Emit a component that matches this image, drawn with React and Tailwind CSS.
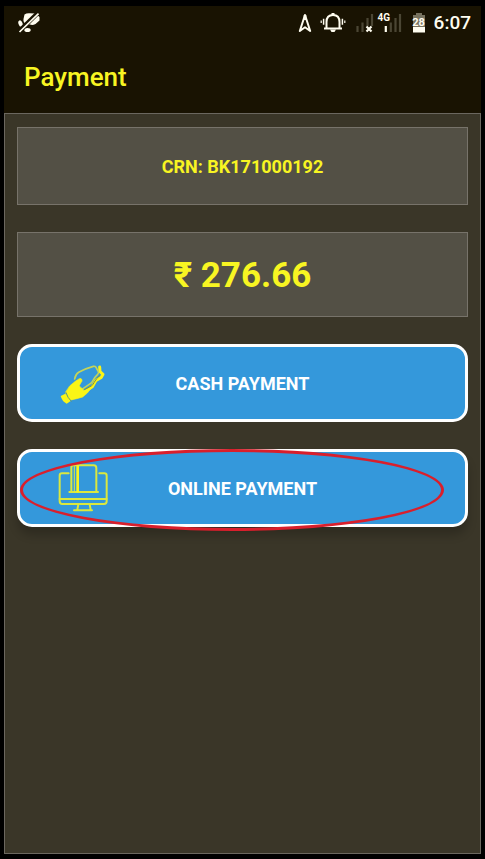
import React from "react";

function MutedBirdIcon() {
  return (
    <svg className="h-5 w-[22px]" viewBox="0 0 22 20" fill="#fffdf0" aria-hidden="true">
      <path d="M6.500 1.500q2-1.500 5-1.300l6 .2 4 3.600v3.500l-4 3.500q-3 1.500-5.500.5l-4-.5q-3-1.500-2.500-5z" />
      <ellipse cx="2.500" cy="10.500" rx="2" ry="3.300" transform="rotate(-20 2.500 10.500)" />
      <ellipse cx="9.500" cy="17" rx="3.200" ry="2" />
      <path d="M1 18.300L19.500 .3" stroke="#191302" strokeWidth="4.500" />
      <path d="M1.500 19L20.500 .7" stroke="#fffdf0" strokeWidth="1.700" />
    </svg>
  );
}

function NavigationIcon() {
  return (
    <svg className="h-5 w-[14px]" viewBox="0 0 14 20" fill="none" stroke="#fffdf0" strokeWidth="2" aria-hidden="true">
      <path d="M7 2L1.800 18 7 14.200 12.200 18z" strokeLinejoin="round" />
      <path d="M7 2v5" strokeWidth="2.600" />
    </svg>
  );
}

function BellIcon() {
  return (
    <svg className="h-5 w-[26px]" viewBox="0 0 26 20" fill="none" stroke="#fffdf0" aria-hidden="true">
      <path d="M4 15.500h18M6.500 15V9Q6.500 2 13 2T19.500 9V15" strokeWidth="2" />
      <path d="M13 0v2" strokeWidth="3" />
      <path d="M10 16.500h6l-1.500 2.500h-3z" fill="#fffdf0" stroke="none" />
      <path d="M3.600 5.800v6M22.400 5.800v6" strokeWidth="1.500" />
      <path d="M1.200 7.500v2.500M24.800 7.500v2.500" strokeWidth="1.200" />
    </svg>
  );
}

function NoSignalIcon() {
  return (
    <svg className="h-5 w-[18px]" viewBox="0 0 18 20" fill="none" aria-hidden="true">
      <path d="M1.500 13v6M6.500 9.500V19M11.500 5v8M16 1v12" stroke="#4b4634" strokeWidth="2.200" />
      <path d="M10.500 13.500l5 5M15.500 13.500l-5 5" stroke="#fffdf0" strokeWidth="2.200" />
    </svg>
  );
}

function MobileSignal() {
  return (
    <span className="relative h-5 w-6">
      <svg className="h-5 w-6" viewBox="0 0 24 20" fill="none" strokeWidth="2.200" aria-hidden="true">
        <path d="M7.800 13v6" stroke="#fffdf0" />
        <path d="M12.800 9.500V19M17.500 5v14M22 1v18" stroke="#4b4634" />
      </svg>
      <span className="absolute left-0 top-0 text-[10px] font-bold leading-[10px]">4G</span>
    </span>
  );
}

function Battery() {
  return (
    <span className="relative h-5 w-3.5">
      <svg className="h-5 w-3.5" viewBox="0 0 14 20" aria-hidden="true">
        <path d="M4 0h6v2H13v13H1V2h3z" fill="#77725f" />
        <path d="M1 14h12V19.500H1z" fill="#fffdf0" />
      </svg>
      <span className="absolute inset-x-0 top-[5px] text-center text-[11px] font-bold leading-[10px] text-[#fffdf0]">
        28
      </span>
    </span>
  );
}

function CashIcon() {
  return (
    <svg
      className="h-[41px] w-[46px]"
      viewBox="18 8 138 123"
      fill="none"
      strokeLinejoin="round"
      strokeLinecap="round"
      aria-hidden="true"
    >
      <path d="M137 20l1 14 9 8-5 9-16 9-11 19-20 13" stroke="#faf516" strokeWidth="9" />
      <path d="M62 56q2-14 12-20 18-11 44-18 5-1 8 3l7 13q2 4-2 8-9 8-15 20-2 5-7 8L88 84" stroke="#c4d45a" strokeWidth="5" />
      <path d="M92 88l20-11q5-3 8-10 6-12 17-21" stroke="#83923d" strokeWidth="3" />
      <path
        d="M48 76l16-13 12-8q7-2 8 4 1 4-4 9l-4 8q2 6 10 9l4 6 20-6-10 13-14 12-18 5-22 5-8-10-3-14z"
        fill="#faf516"
        stroke="#faf516"
        strokeWidth="2"
      />
      <path d="M20 107l14-7 16 22-12 8q-14-7-18-23z" fill="#faf516" />
      <path d="M45 92l-6 5 12 21 6-1z" fill="#faf516" />
      <path d="M36 97q4 15 16 26" stroke="#5f9680" strokeWidth="3" />
    </svg>
  );
}

function OnlineIcon() {
  return (
    <svg
      className="h-12 w-[50px]"
      viewBox="12 12 150 144"
      fill="none"
      stroke="#dbe83e"
      strokeWidth="6"
      strokeLinejoin="round"
      strokeLinecap="round"
      aria-hidden="true"
    >
      <path d="M44 40H24q-7 0-7 7V124q0 8 8 8H150q8 0 8-8V47q0-7-7-7H136" />
      <path d="M17 117H158M73 133l-3 16M107 133l3 16M60 151H114" />
      <path d="M52 92V23q0-7 7-7H119q8 0 8 8V92M46 96H132" />
      <path d="M61 18v76" strokeWidth="3" />
      <path d="M71 18v76" stroke="#f6f51d" strokeWidth="8" />
    </svg>
  );
}

function InfoCard({ className, children }) {
  return (
    <section
      className={`flex items-center justify-center border border-[#77736a] bg-[#535045] font-bold text-[#f8f522] ${className}`}
    >
      {children}
    </section>
  );
}

function PaymentButton({ icon, label, className = "" }) {
  return (
    <button
      type="button"
      className={`relative flex h-[78px] w-full items-center justify-center rounded-[15px] border-[3px] border-white bg-[#3498db] pt-0.5 text-lg font-bold text-white ${className}`}
    >
      <span className="absolute left-[38px] top-0 flex h-full w-[50px] items-center justify-center">{icon}</span>
      {label}
    </button>
  );
}

export default function App() {
  return (
    <div className="flex min-h-screen flex-col bg-black px-1 pb-[5px] pt-1.5 font-['Roboto',sans-serif]">
      <header className="bg-[#191302]">
        <div className="flex h-[34px] items-center pl-3.5 pr-2.5 text-[#fffdf0]">
          <MutedBirdIcon />
          <div className="ml-auto flex items-center">
            <NavigationIcon />
            <span className="ml-2 flex">
              <BellIcon />
            </span>
            <span className="ml-2.5 flex items-center gap-1">
              <NoSignalIcon />
              <MobileSignal />
            </span>
            <span className="ml-2.5 flex">
              <Battery />
            </span>
            <time className="ml-2 text-[19px] font-medium leading-5">6:07</time>
          </div>
        </div>
        <h1 className="flex h-[73px] items-center pl-5 text-[26px] font-medium leading-8 text-[#f8f522]">Payment</h1>
      </header>
      <main className="flex flex-1 flex-col gap-[27px] border border-[#6b675f] bg-[#3a3628] px-3 py-[13px]">
        <InfoCard className="h-[78px] pt-0.5 text-lg">CRN: BK171000192</InfoCard>
        <InfoCard className="h-[85px] pt-1 text-[35px]">₹ 276.66</InfoCard>
        <PaymentButton icon={<CashIcon />} label="CASH PAYMENT" />
        <div className="relative">
          <PaymentButton
            icon={<OnlineIcon />}
            label="ONLINE PAYMENT"
            className="shadow-[0_8px_10px_rgba(0,0,0,0.2)]"
          />
          <div className="pointer-events-none absolute -bottom-1 left-[3px] right-6 top-0 rounded-[50%] border-[3px] border-[#d91f2c]" />
        </div>
      </main>
    </div>
  );
}
